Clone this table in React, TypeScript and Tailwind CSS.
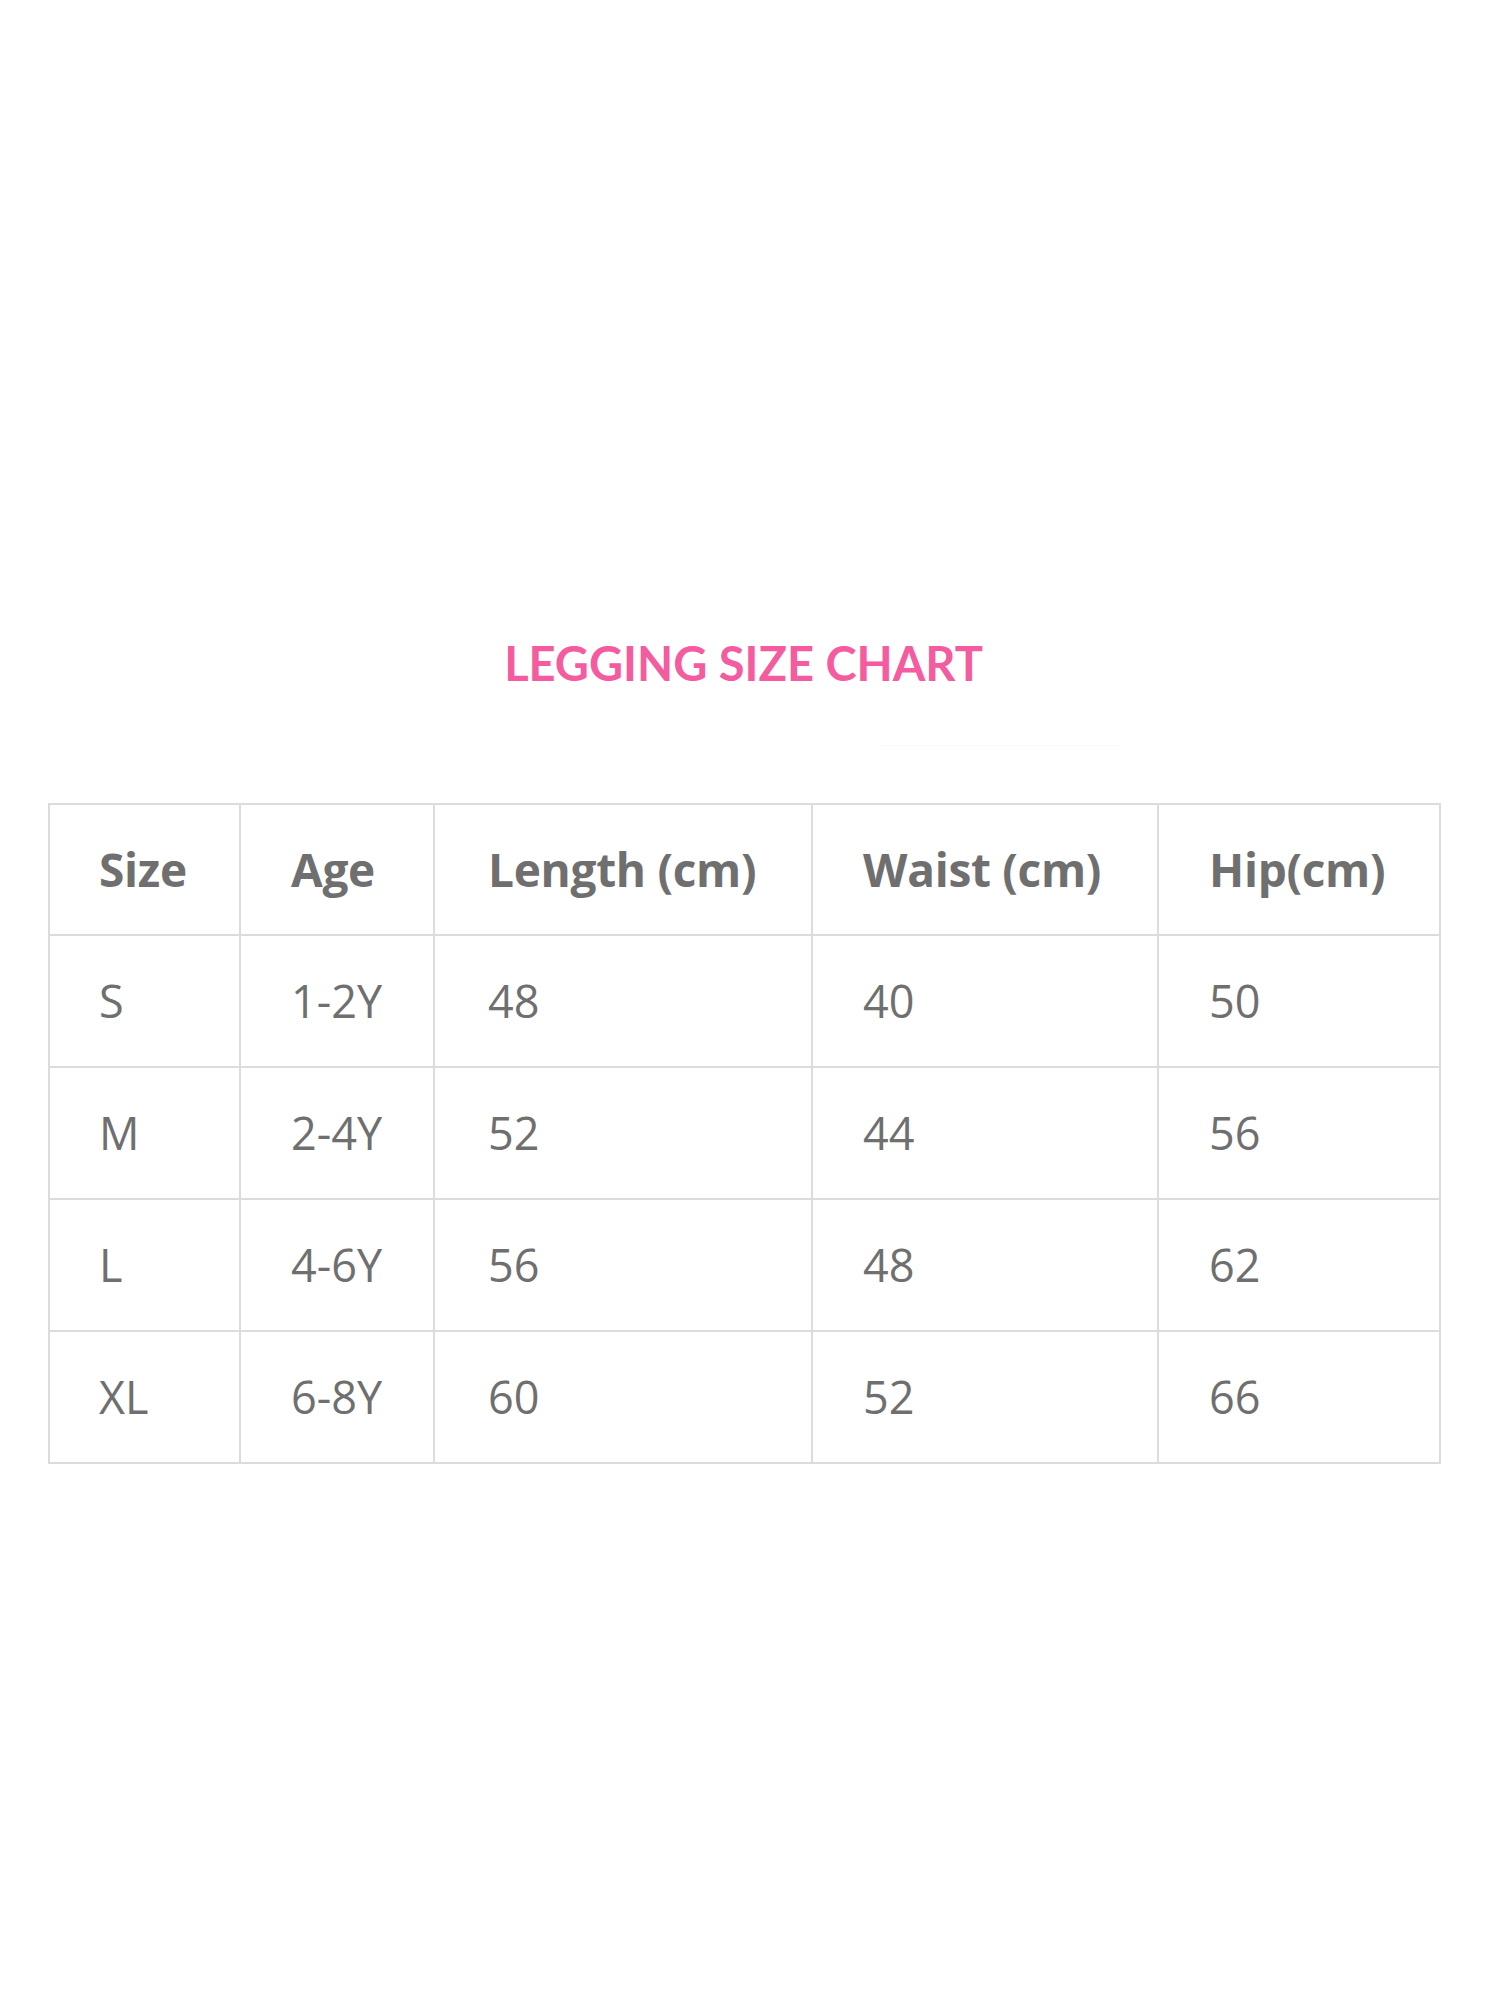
import React from "react";

const headers = ["Size", "Age", "Length (cm)", "Waist (cm)", "Hip(cm)"];
const rows = [
  ["S", "1-2Y", "48", "40", "50"],
  ["M", "2-4Y", "52", "44", "56"],
  ["L", "4-6Y", "56", "48", "62"],
  ["XL", "6-8Y", "60", "52", "66"],
];
const pads = ["pl-[49px]", "pl-[50px]", "pl-[53px]", "pl-[50px]", "pl-[50px]"];

export default function App() {
  return (
    <div className="w-[1500px] h-[2000px] bg-white relative">
      <div className="pt-[639px]">
        <div className="ml-[48px] w-[1391px]">
          <h2 className="text-center text-[47px] leading-[48px] font-bold text-[#f45c9f] font-['Lato',sans-serif]">
            LEGGING SIZE CHART
          </h2>
          <div className="h-[1px] ml-[832px] w-[240px] mt-[58px] bg-[#fafafa]" />
          <table className="mt-[57px] w-[1391px] table-fixed border-collapse border-2 border-[#dcdcdc] font-['Open_Sans',sans-serif] text-[#6f6f6f]">
            <colgroup>
              <col className="w-[191px]" />
              <col className="w-[194px]" />
              <col className="w-[378px]" />
              <col className="w-[346px]" />
              <col className="w-[282px]" />
            </colgroup>
            <thead>
              <tr className="h-[131px]">
                {headers.map((h, i) => (
                  <th
                    key={h}
                    className={`border-2 border-[#dcdcdc] text-left align-middle text-[46px] font-bold tracking-[-0.3px] ${pads[i]}`}
                  >
                    {h}
                  </th>
                ))}
              </tr>
            </thead>
            <tbody>
              {rows.map((r) => (
                <tr key={r[0]} className="h-[132px]">
                  {r.map((c, i) => (
                    <td
                      key={i}
                      className={`border-2 border-[#dcdcdc] text-left align-middle text-[45px] font-normal ${pads[i]}`}
                    >
                      {c}
                    </td>
                  ))}
                </tr>
              ))}
            </tbody>
          </table>
        </div>
      </div>
    </div>
  );
}
